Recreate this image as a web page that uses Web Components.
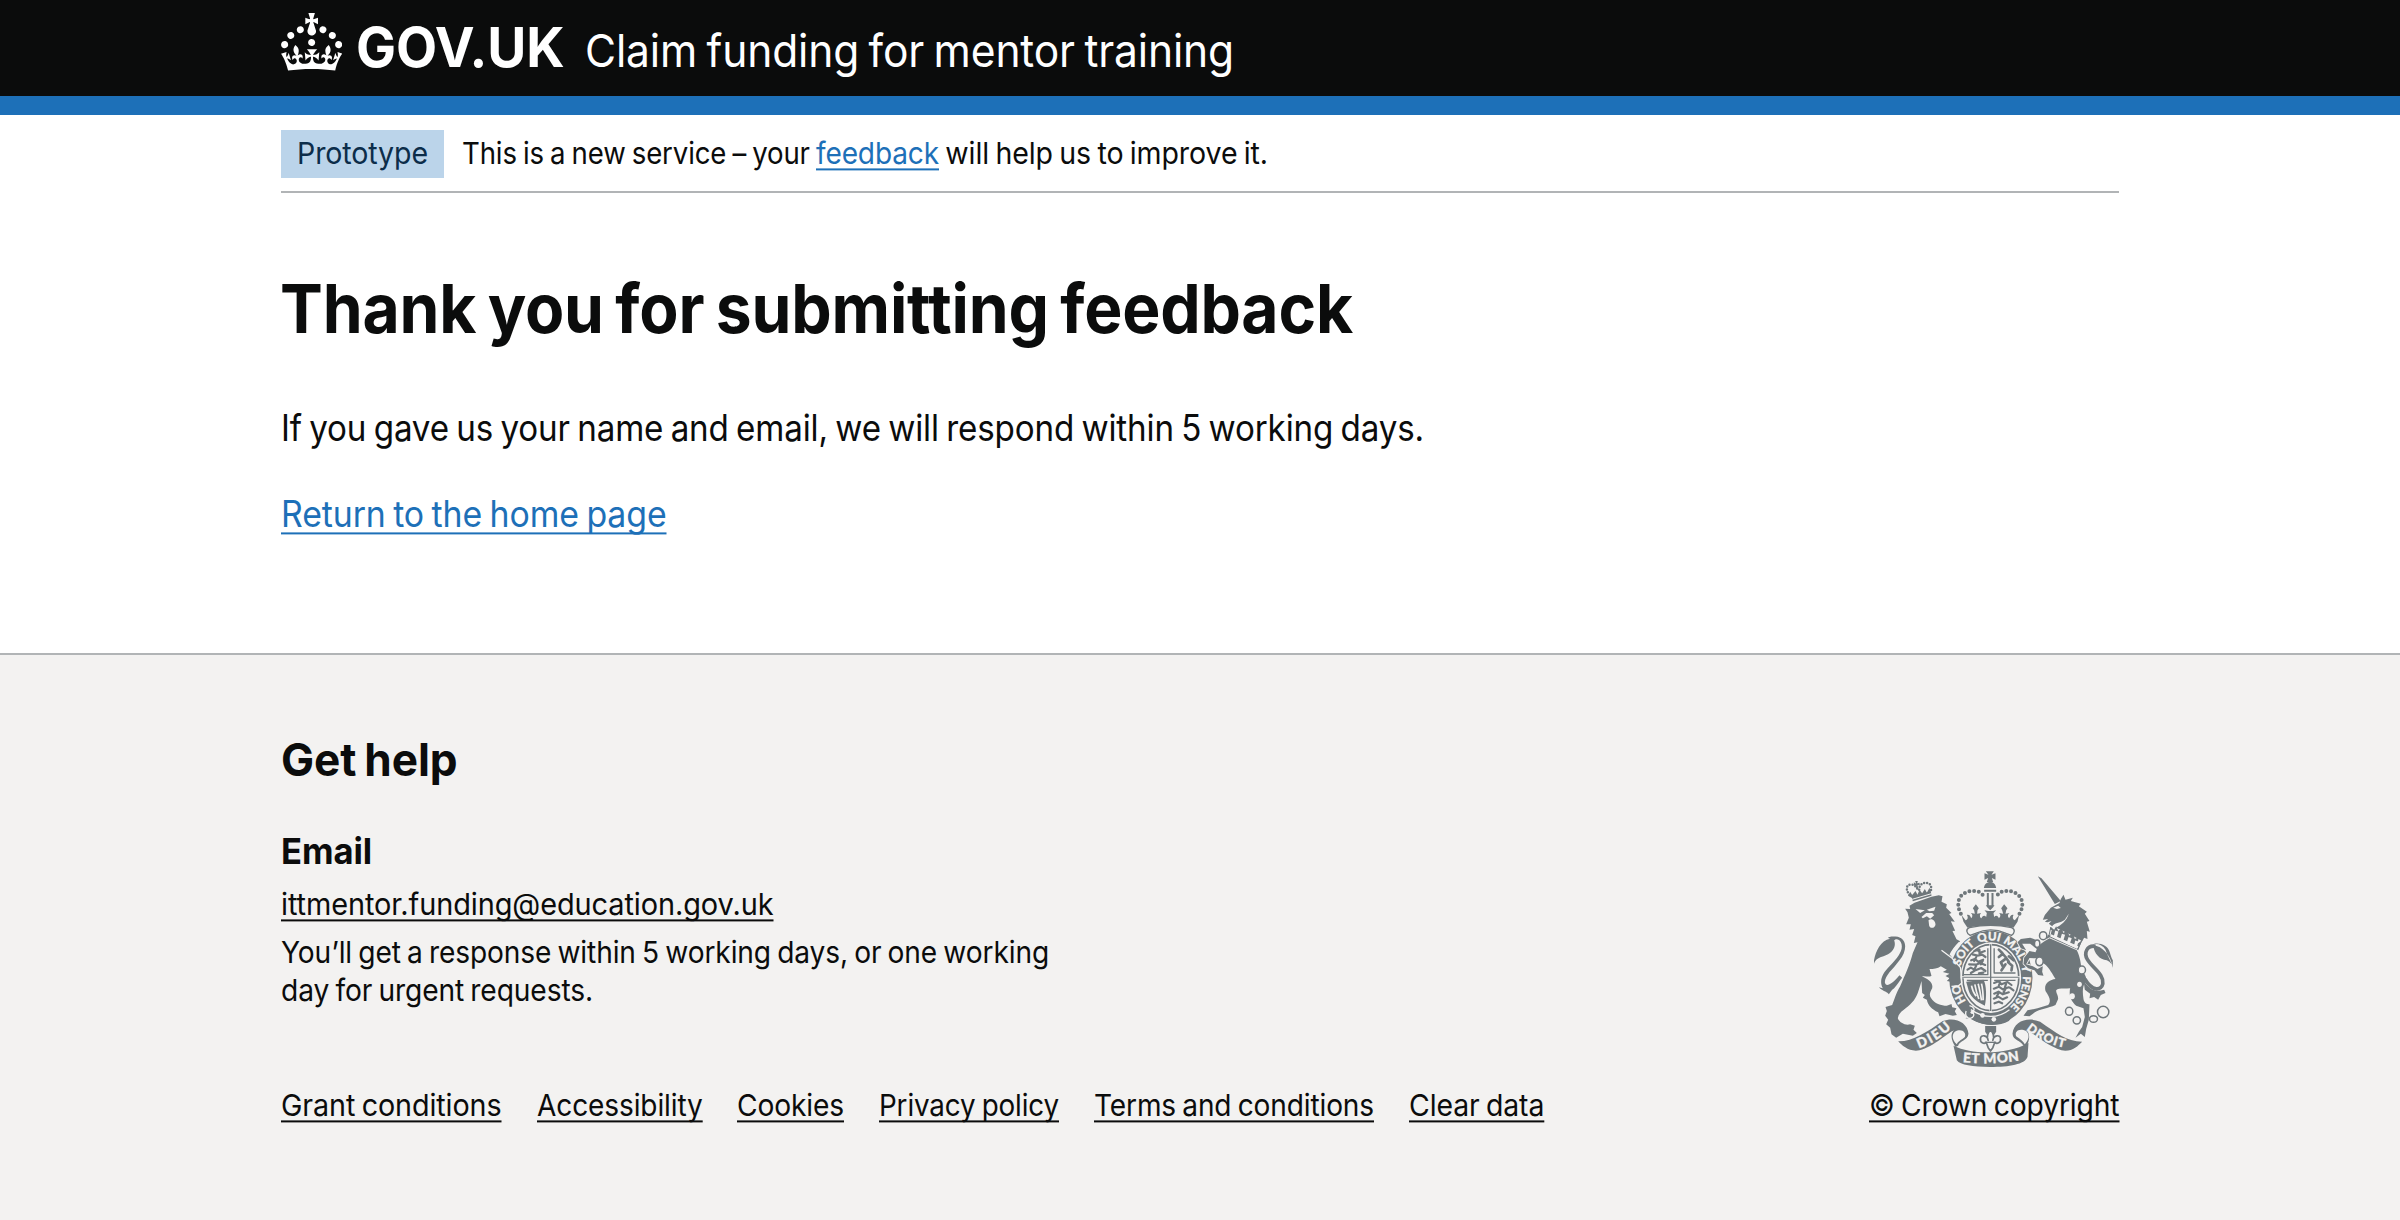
<!DOCTYPE html>
<html lang="en">
<head>
<meta charset="utf-8">
<title>Thank you for submitting feedback - Claim funding for mentor training</title>
<style>
html,body{margin:0;padding:0}
body{background:#f3f2f1;color:#0b0c0c;font-family:Inter,"Noto Sans",sans-serif;font-size:30.4px;line-height:38.3px;-webkit-font-smoothing:antialiased}
</style>
</head>
<body>
<claims-page></claims-page>
<script>
const define=(name,html,after)=>{
  const t=document.createElement('template');
  t.innerHTML=html;
  customElements.define(name,class extends HTMLElement{
    connectedCallback(){
      if(this.shadowRoot)return;
      this.attachShadow({mode:'open'}).append(t.content.cloneNode(true));
      if(after)after(this);
    }
  });
};

/* A single line of text set to a given measure. */
const fit=el=>{
  const s=el.shadowRoot.querySelector('span'),w=+el.getAttribute('w');
  el.style.width=w+'px';
  const n=el.textContent.length;
  const natural=s.getBoundingClientRect().width;
  s.style.letterSpacing=((w-natural)*0.1/n)+'px';
  s.style.transform='translateY(1.4px) scaleX('+w/s.getBoundingClientRect().width+')';
};
define('set-line',`<style>
:host{display:inline-block;white-space:nowrap}
span{display:inline-block;transform-origin:0 50%;white-space:pre;word-spacing:-.055em;font-variant-ligatures:none}
:host([link]) span{text-decoration:underline;text-decoration-thickness:2px;text-underline-offset:calc(.1578em - 1.2px);text-decoration-skip-ink:none}
:host([link=blue]){color:#1d70b8}
</style><span><slot></slot></span>`,fit);

define('crown-logo',`<style>:host{display:block;width:61.3px;height:57.5px}svg{display:block;width:100%;height:100%}</style>
<svg viewBox="0 0 32 30" fill="#fff"><path fill-rule="evenodd" d="M22.6 10.4c-1 .4-2-.1-2.4-1-.4-.9.1-2 1-2.4.9-.4 2 .1 2.4 1s-.1 2-1 2.4m-5.9 6.7c-.9.4-2-.1-2.4-1-.4-.9.1-2 1-2.4.9-.4 2 .1 2.4 1s-.1 2-1 2.4m10.8-3.7c-1 .4-2-.1-2.4-1-.4-.9.1-2 1-2.4.9-.4 2 .1 2.4 1s0 2-1 2.4m3.3 4.8c-1 .4-2-.1-2.4-1-.4-.9.1-2 1-2.4.9-.4 2 .1 2.4 1s-.1 2-1 2.4M17 4.7l2.3 1.2V2.5l-2.3.7-.2-.2.9-3h-3.4l.9 3-.2.2c-.1.1-2.3-.7-2.3-.7v3.4L15 4.7c.1.1.1.2.2.2l-1.3 4c-.1.2-.1.4-.1.6 0 1.1.8 2 1.9 2.2h.7c1-.2 1.9-1.1 1.9-2.1 0-.2 0-.4-.1-.6l-1.3-4c-.1-.2 0-.2.1-.3m-7.6 5.7c.9.4 2-.1 2.4-1 .4-.9-.1-2-1-2.4-.9-.4-2 .1-2.4 1s0 2 1 2.4m-5 3c.9.4 2-.1 2.4-1 .4-.9-.1-2-1-2.4-.9-.4-2 .1-2.4 1s.1 2 1 2.4m-3.2 4.8c.9.4 2-.1 2.4-1 .4-.9-.1-2-1-2.4-.9-.4-2 .1-2.4 1s0 2 1 2.4m14.8 11c4.4 0 8.6.3 12.3.8 1.1-4.5 2.4-7 3.7-8.8l-2.5-.9c.2 1.3.3 1.9 0 2.7-.4-.4-.8-1.1-1.1-2.3l-1.2 4c.7-.5 1.3-.8 2-.9-1.1 2.5-2.6 3.1-3.5 3-1.1-.2-1.7-1.2-1.5-2.1.3-1.2 1.5-1.5 2.1-.1 1.1-2.3-.8-3-2-2.3 1.9-1.9 2.1-3.5.6-5.6-2.1 1.6-2.1 3.2-1.2 5.5-1.2-1.4-3.2-.6-2.5 1.6.9-1.4 2.1-.5 1.9.8-.2 1.1-1.7 2.1-3.5 1.9-2.7-.2-2.9-2.1-2.9-3.6.7-.1 1.9.5 2.9 1.9l.4-4.3c-1.1 1.1-2.1 1.4-3.2 1.4.4-1.2 2.1-3 2.1-3h-5.4s1.7 1.9 2.1 3c-1.1 0-2.1-.2-3.2-1.4l.4 4.3c1-1.4 2.2-2 2.9-1.9-.1 1.5-.2 3.4-2.9 3.6-1.9.2-3.4-.8-3.5-1.9-.2-1.3 1-2.2 1.9-.8.7-2.3-1.2-3-2.5-1.6.9-2.2.9-3.9-1.2-5.5-1.5 2-1.3 3.7.6 5.6-1.2-.7-3.1 0-2 2.3.6-1.4 1.8-1.1 2.1.1.2.9-.3 1.9-1.5 2.1-.9.2-2.4-.5-3.5-3 .6 0 1.2.3 2 .9l-1.2-4c-.3 1.1-.7 1.9-1.1 2.3-.3-.8-.2-1.4 0-2.7l-2.9.9C1.3 23 2.6 25.5 3.7 30c3.7-.5 7.9-.8 12.3-.8"/></svg>`);

define('service-header',`<style>
:host{display:block;background:#0b0c0c;color:#fff;border-bottom:19px solid #1d70b8;height:96px}
.in{width:1838px;margin:0 auto;display:flex;align-items:flex-start}
crown-logo{margin-top:13px}
.g{font-weight:700;font-size:55px;line-height:60px;margin:15.8px 0 0 13.5px}
.t{font-size:45.6px;line-height:48px;margin:25.8px 0 0 21px}
</style><div class="in"><crown-logo></crown-logo><set-line class="g" w="208.5">GOV.UK</set-line><set-line class="t" w="649">Claim funding for mentor training</set-line></div>`);

define('phase-banner',`<style>
:host{display:flex;align-items:flex-start;height:61px;padding-top:15px;border-bottom:2px solid #b1b4b6;line-height:45px}
.tag{background:#bbd4ea;color:#0c2d4a;width:163px;height:48px;text-align:center;margin-right:18px}
</style><div class="tag"><set-line w="131">Prototype</set-line></div><set-line w="354">This is a new service – your </set-line><set-line link="blue" w="123">feedback</set-line><set-line w="329"> will help us to improve it.</set-line>`);

define('royal-arms',`<style>:host{display:block;width:239.4px;height:196px}svg{display:block;width:100%;height:100%}text{font-family:Lato,sans-serif;font-weight:900}</style>
<svg viewBox="43.5 32 718.2 588" fill="#6f777b" stroke-linejoin="round">
<defs><path id="ring" pathLength="100" d="M394 462A96 111 0 0 1 394 240A96 111 0 0 1 394 462"/>
<path id="ca" d="M178 564Q232 545 276 503"/><path id="cb" d="M310 606Q394 614 484 600"/><path id="cc" d="M500 508Q548 548 614 562"/></defs>
<!-- lion -->
<g>
<path d="M43 302C48 275 62 240 92 235C78 232 90 226 115 229C145 238 142 272 120 300C100 328 76 345 76 366C78 380 95 376 120 345L128 352C112 372 108 382 98 388L88 402C84 394 74 396 58 381L70 384C58 362 68 340 90 318C118 290 134 266 124 246C118 234 108 236 104 240C112 262 96 280 72 288C58 292 48 296 43 312Z"/>
<path d="M137 145L152 146L150 136L165 127L216 109L238 105L249 108L246 124L262 132L260 142L276 158L269 161L286 184L274 183L287 211L279 212L291 237L302 243C288 258 279 268 272 284L301 322L304 366L294 372L283 368L276 374L274 364L262 362L270 354L258 347L270 340L250 335L262 328L244 318C234 326 222 326 210 326L216 346C208 352 200 346 187 348C205 356 222 366 218 384C212 396 208 404 214 412C224 430 246 436 262 436L276 431L278 441L291 444L286 453L292 464L280 466L258 461L240 468L236 456C216 446 206 436 202 418L190 412L196 404L188 398L186 362C178 390 172 412 158 426C142 446 118 452 115 474C120 488 138 496 152 492L166 496L162 508L172 518L160 526L130 520L110 532L96 522L92 502L80 492L86 478L77 466L82 452L78 440L98 434C104 420 110 398 122 378C136 346 152 310 160 278L174 246L163 248L168 228L158 224L164 206L150 208L154 192L140 192L148 172L144 156Z"/>
<path fill="#f3f2f1" d="M168 146L182 158L196 150ZM202 148L228 139L224 151L210 153ZM186 170L200 158L218 158L224 165L212 175L202 168L190 174ZM207 180C217 172 228 182 228 193C226 204 213 206 209 196Z"/>
<path d="M156 109L214 93L216 106L160 123Z"/><path fill="none" stroke="#f3f2f1" stroke-width="3" d="M158 117L216 100"/>
<path d="M146 106L152 94L158 104L168 92L174 103L180 88L188 99L196 86L202 97L210 82L214 96L156 112Z"/>
<path fill="none" stroke="#6f777b" stroke-width="7.5" stroke-linecap="round" stroke-dasharray="0 9" d="M150 104C136 84 142 72 156 73C164 73 171 80 175 88M179 88C178 76 190 64 204 68C218 72 216 88 213 94"/>
<path d="M163 66L170 70L167 62L175 62L173 69L180 67L181 75L174 74L176 83L170 84L170 76L164 76Z"/>
</g>
<!-- crown -->
<path d="M379 33H403L396 43L408 39V58L397 53L401 65H382L386 53L375 58V39L387 43ZM373 83C376 69 384 65 392 65C401 65 408 70 410 83Z"/>
<path d="M374 88H410V94H374ZM382 98H388V137H382ZM396 98H402V137H396ZM379 135H405L401 141L392 150L383 141Z"/>
<path fill="none" stroke="#6f777b" stroke-width="12" stroke-linecap="round" stroke-dasharray="0 14.2" d="M304 160C296 145 293 128 301 112C312 93 340 88 357 94C366 98 371 104 374 110M480 160C489 145 492 128 483 112C471 93 444 88 427 94C419 98 413 104 410 110"/>
<path d="M306 164L318 180C325 178 327 171 322 164C330 162 333 168 335 174C340 170 340 162 334 158L346 160L344 150L340 144L349 132L358 144L354 150L353 160L365 158C359 164 361 172 366 174C368 166 376 164 380 170L382 158L375 150L386 152H400L410 150L402 158L404 170C409 164 416 166 418 174C424 170 424 162 419 158L431 160L428 150L425 144L434 132L444 144L440 150L438 160L450 158C444 162 444 170 449 174C452 168 456 162 462 164C458 171 460 178 466 180L479 164L474 184L462 202C424 193 362 193 324 202L312 184Z"/>
<!-- garter -->
<ellipse cx="394" cy="352" rx="125" ry="141"/>
<path fill="#f3f2f1" stroke="#6f777b" stroke-width="4" d="M330 202C368 194 418 194 456 202C468 206 466 219 456 225L440 219C410 206 376 206 348 219L332 225C320 219 318 206 330 202Z"/>
<ellipse cx="394" cy="352" rx="91" ry="106" fill="#f3f2f1"/>
<ellipse cx="394" cy="352" rx="84" ry="99" fill="none" stroke="#6f777b" stroke-width="5"/>
<path fill="#f3f2f1" d="M390 248H397V456H390ZM304 347H482V354H304Z"/>
<path d="M391.500 252H395.500V452H391.500ZM308 349H480V352.500H308Z"/>
<path fill="none" stroke="#6f777b" stroke-width="4" d="M404 264V338H468M385 264V343H312M385 360H322M404 360H468"/>
<g fill="none" stroke="#6f777b" stroke-width="6.5" stroke-linecap="round">
<path d="M345 272L354 268L362 277L376 272M339 282L354 286L368 283L378 290M335 300L346 296L356 304L371 298M329 312L349 313L362 308L377 314M324 328L334 322L348 330L365 323L378 332M334 338L344 332M358 339L372 337M360 268V280M350 291L344 302M370 301L364 312M350 316L344 328"/>
<path d="M404 368L417 363L426 372L444 365L456 374M403 385L418 379L430 387L448 381M404 400L417 394L430 402L448 396M403 415L416 409L430 417L443 411M405 429L418 424L428 429M422 366L418 376M440 370L436 382M418 398L412 407M438 386L432 396M451 382L462 390"/>
</g>
<path fill="none" stroke="#6f777b" stroke-width="8" stroke-linecap="round" d="M418 268L428 278L438 290L448 304M430 280L418 290M440 294L424 306L430 318M446 306L458 316L456 330M438 312L426 330M448 288L462 300"/>
<path d="M320 364L372 358C381 372 382 412 376 436L361 428C344 418 330 404 326 385Z"/>
<path fill="none" stroke="#f3f2f1" stroke-width="5" d="M336 376Q340 396 350 408M346 372Q350 394 358 416M356 370Q362 392 366 420M366 370Q371 390 371 420"/>
<g fill="#f3f2f1" stroke="#f3f2f1" stroke-width=".8" font-size="35">
<text text-anchor="middle"><textPath href="#ring" startOffset="17.6">HO</textPath></text>
<text text-anchor="middle"><textPath href="#ring" startOffset="36.2">SOIT</textPath></text>
<text text-anchor="middle"><textPath href="#ring" startOffset="49.2">QUI</textPath></text>
<text text-anchor="middle"><textPath href="#ring" startOffset="61.4">MAL</textPath></text>
<text text-anchor="middle"><textPath href="#ring" startOffset="71.2">Y</textPath></text>
<text text-anchor="middle" font-size="33"><textPath href="#ring" startOffset="82.4">PENSE</textPath></text></g>
<path d="M338 462C372 485 410 490 446 466L464 462L448 482C420 498 372 500 336 476L318 474Z"/>
<path fill="none" stroke="#f3f2f1" stroke-width="4" d="M334 448C372 474 414 476 450 448M330 436C344 440 348 448 338 456C346 460 344 472 332 474C320 474 316 462 320 452"/>
<circle cx="369" cy="465" r="7" fill="#f3f2f1"/><circle cx="403" cy="477" r="7" fill="#f3f2f1"/><circle cx="338" cy="456" r="5" fill="#f3f2f1"/>
<!-- lion's raised paw over the garter -->
<path fill="none" stroke="#f3f2f1" stroke-width="4" d="M300 246C288 258 279 268 272 284M246 270L276 292L303 322L307 368L296 377L276 378"/>
<!-- unicorn -->
<path d="M535 48L546 54L604 122L586 131ZM550 178L556 164L574 142L600 128L604 116L612 103L618 118L640 112L634 122L664 130L658 138L682 154L676 160L690 182L682 184L691 214L682 212L684 236L674 232L668 243C644 226 614 214 590 202C602 196 622 182 628 160L616 178C600 190 584 186 578 198L568 190L576 182L564 186L556 184L566 176Z"/>
<path fill="#f3f2f1" d="M581 142L596 136L604 143L592 146Z"/>
<path d="M570 214L574 200L584 208L590 198L596 212L606 204L612 218L622 210L630 226L640 218L646 236L658 230L654 250L668 240L656 270L560 236Z"/>
<path fill="none" stroke="#f3f2f1" stroke-width="10" d="M573 226L655 262M572 208L568 224M592 212L588 228M612 222L607 238M632 232L627 246M652 242L648 258"/>
<path fill="none" stroke="#6f777b" stroke-width="3" d="M574 200L568 228L654 268L668 238"/>
<path stroke="#f3f2f1" stroke-width="5" paint-order="stroke" d="M570 234L652 270C662 290 664 310 666 326C676 344 684 350 678 366C670 376 668 392 672 416C674 428 682 432 690 432L688 478L680 506L676 530L664 520L648 532L658 514L668 500L676 470L672 444L650 436C632 420 628 402 632 384C612 386 596 382 590 390C590 400 596 404 596 416L588 434C566 444 540 446 526 456L510 468L492 466L504 450L534 444L566 434C576 422 570 410 558 392C552 370 570 358 588 356C572 330 566 320 556 312L530 294L510 293L500 312L520 318L534 326L550 318L548 334L552 346L536 344L525 330L506 324L492 310L494 292L510 272L528 276L532 266L512 250L488 250L500 270L484 264L474 246L484 236L512 232L528 238L540 254C550 246 560 240 570 234Z"/>
<path d="M760 322C756 304 744 288 738 268C730 254 712 248 700 253C704 248 724 248 736 256C752 264 752 286 760 300ZM701 255C704 280 720 298 742 300C754 306 758 314 760 320C752 284 730 258 701 255Z"/>
<path fill="none" stroke="#6f777b" stroke-width="11" d="M708 258C682 254 672 278 684 298C700 324 734 342 730 370C726 390 700 396 676 356"/>
<path d="M672 360C688 388 706 396 734 388L738 398L724 404L716 418L704 410L690 414L692 400L676 388Z"/>
<g fill="#f3f2f1" stroke="#6f777b" stroke-width="4.5"><ellipse cx="551" cy="226" rx="11" ry="12"/><ellipse cx="533" cy="250" rx="8" ry="11"/><ellipse cx="540" cy="303" rx="11" ry="13"/><ellipse cx="667" cy="329" rx="11" ry="12"/><ellipse cx="629" cy="453" rx="11" ry="12"/><ellipse cx="652" cy="480" rx="11" ry="11"/><ellipse cx="702" cy="476" rx="12" ry="10"/><circle cx="731" cy="455" r="17"/></g>
<ellipse cx="660" cy="372" rx="7" ry="8" fill="#f3f2f1"/><ellipse cx="638" cy="408" rx="8" ry="9" fill="#f3f2f1"/>
<!-- motto scroll -->
<path d="M116 543C160 544 200 516 250 482C286 468 324 486 327 520C324 542 300 540 296 556L288 560C274 538 272 520 284 510C270 514 222 560 180 570C150 576 128 556 116 543Z"/>
<path fill="#f3f2f1" d="M286 514C306 502 322 516 316 530C304 540 294 544 292 552C278 538 276 524 286 514Z"/>
<path d="M668 544C622 544 588 516 542 484C504 468 462 484 459 520C460 540 484 540 492 556L500 560C512 538 512 520 500 508C524 520 562 556 606 570C636 576 654 558 668 544Z"/>
<path fill="#f3f2f1" d="M500 512C480 502 464 512 470 528C482 536 492 544 496 552C508 538 512 524 500 512Z"/>
<path d="M282 556C340 584 440 584 507 548L504 590C496 612 450 620 392 620C340 620 302 614 292 600Z"/>
<g fill="#f3f2f1" stroke="#f3f2f1" font-size="41"><text textLength="116"><textPath href="#ca">DIEU</textPath></text><text textLength="170"><textPath href="#cb">ET MON</textPath></text><text font-size="37" textLength="128"><textPath href="#cc">DROIT</textPath></text></g>
<!-- pendant -->
<path d="M377 497H410V514L402 526H385L377 514Z"/>
<path fill="#f3f2f1" stroke="#6f777b" stroke-width="5" d="M393 508C403 520 406 528 400 540C402 524 422 522 423 534C425 548 412 552 406 546L400 562L393 572L386 562L380 546C374 552 361 548 363 534C364 522 384 524 386 540C380 528 383 520 393 508Z"/>
<path fill="none" stroke="#6f777b" stroke-width="4" d="M376 546H410"/>
</svg>`);

define('page-footer',`<style>
:host{display:block;border-top:2px solid #b1b4b6;background:#f3f2f1;height:491px;padding-top:74.3px}
.in{width:1838px;margin:0 auto;display:flex;justify-content:space-between;align-items:flex-end}
.l{display:flex;flex-direction:column;align-items:flex-start}
h2,h3{margin:0;font-weight:700}
h2{font-size:45.6px;line-height:60px}
h3{font-size:36px;line-height:48px;margin:37.2px 0 9.7px}
.gap{height:9.4px}
nav{display:flex;gap:35px;margin-top:77px}
.r{display:flex;flex-direction:column;align-items:center}
royal-arms{margin-bottom:18.5px}
</style><div class="in"><div class="l">
<h2><set-line w="176.5">Get help</set-line></h2><h3><set-line w="91">Email</set-line></h3>
<set-line link w="492.5">ittmentor.funding@education.gov.uk</set-line><div class="gap"></div>
<set-line w="768">You’ll get a response within 5 working days, or one working</set-line><set-line w="312">day for urgent requests.</set-line>
<nav><set-line link w="220.5">Grant conditions</set-line><set-line link w="165.7">Accessibility</set-line><set-line link w="107">Cookies</set-line><set-line link w="180">Privacy policy</set-line><set-line link w="280">Terms and conditions</set-line><set-line link w="135.3">Clear data</set-line></nav>
</div><div class="r"><royal-arms></royal-arms><set-line link w="250.5">© Crown copyright</set-line></div></div>`);

define('claims-page',`<style>
:host{display:block}
.body{background:#fff;height:538px}
.in{width:1838px;margin:0 auto}
h1{font-size:68px;line-height:80px;font-weight:700;margin:73.6px 0 56.6px -1.500px}
p{font-size:36.2px;line-height:48px;margin:0 0 37.7px}
h1 set-line,p set-line{display:block}
</style><service-header></service-header>
<div class="body"><div class="in"><phase-banner></phase-banner>
<h1><set-line w="1073">Thank you for submitting feedback</set-line></h1>
<p><set-line w="1143">If you gave us your name and email, we will respond within 5 working days.</set-line></p>
<p><set-line link="blue" w="385.5">Return to the home page</set-line></p></div></div>
<page-footer></page-footer>`);
</script>
</body>
</html>
